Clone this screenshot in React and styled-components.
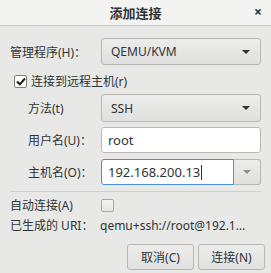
import React from 'react';
import styled, { createGlobalStyle, css } from 'styled-components';

const GlobalStyle = createGlobalStyle`
  html, body {
    margin: 0;
    padding: 0;
    background: #e8e8e7;
  }
  body {
    font-family: "Noto Sans", "Noto Sans CJK SC", sans-serif;
    color: #2e3436;
  }
`;

const Window = styled.div`
  width: 271px;
  height: 273px;
  background: #e8e8e7;
  display: flex;
  flex-direction: column;
  overflow: hidden;
`;

const TitleBar = styled.div`
  height: 25px;
  border-bottom: 1px solid #c9c9c6;
  background: #f3f3f2;
  display: flex;
  align-items: center;
  justify-content: center;
  position: relative;
`;

const Title = styled.span`
  font-size: 13px;
  font-weight: 700;
  color: #2e3436;
`;

const Close = styled.span`
  position: absolute;
  right: 9px;
  top: 5px;
  font-size: 14px;
  font-weight: 700;
  line-height: 14px;
  color: #2e3436;
`;

const Body = styled.div`
  padding: 12px 10px 0 10px;
  display: flex;
  flex-direction: column;
`;

const Row = styled.div`
  display: flex;
  align-items: center;
  height: ${(p) => p.$h || 26}px;
  margin-top: ${(p) => p.$mt || 0}px;
`;

const Label = styled.span`
  width: ${(p) => (p.$indent ? 73 : 91)}px;
  padding-left: ${(p) => (p.$indent ? 18 : 0)}px;
  font-size: 12px;
  white-space: nowrap;
  flex-shrink: 0;
`;

const grayButton = css`
  background: linear-gradient(#ececeb, #e0e0df);
  border: 1px solid #b6b6b3;
  border-radius: 3px;
  box-sizing: border-box;
`;

const Combo = styled.div`
  ${grayButton};
  width: 160px;
  height: 100%;
  display: flex;
  align-items: center;
  justify-content: space-between;
  padding: 0 10px 0 9px;
  font-size: 12px;
`;

const Arrow = styled.span`
  width: 0;
  height: 0;
  border-left: 4px solid transparent;
  border-right: 4px solid transparent;
  border-top: 4px solid ${(p) => p.$color || '#2e3436'};
`;

const Entry = styled.div`
  width: ${(p) => p.$w || 160}px;
  height: 100%;
  box-sizing: border-box;
  background: #ffffff;
  border: 1px solid ${(p) => (p.$focus ? '#4a90d9' : '#b8b8b5')};
  border-radius: ${(p) => (p.$joined ? '3px 0 0 3px' : '3px')};
  display: flex;
  align-items: center;
  padding-left: 6px;
  font-size: 13px;
  color: #2e3436;
`;

const Caret = styled.span`
  display: inline-block;
  width: 1px;
  height: 15px;
  background: #2e3436;
  margin-left: 1px;
`;

const DropButton = styled.div`
  ${grayButton};
  width: 27px;
  height: 100%;
  border-left: none;
  border-radius: 0 3px 3px 0;
  display: flex;
  align-items: center;
  justify-content: center;
`;

const CheckRow = styled.label`
  display: flex;
  align-items: center;
  gap: 4px;
  padding-left: 4px;
  font-size: 12px;
`;

const CheckBox = styled.span`
  width: 13px;
  height: 13px;
  box-sizing: border-box;
  border: 1px solid ${(p) => (p.$checked ? '#7d807b' : '#a8aaa6')};
  border-radius: 2px;
  background: ${(p) => (p.$checked ? '#ffffff' : 'linear-gradient(#f4f4f3, #e6e6e5)')};
  display: flex;
  align-items: center;
  justify-content: center;
`;

const Separator = styled.div`
  height: 1px;
  background: #cfcfcc;
  margin-top: 6px;
`;

const UriText = styled.span`
  font-size: 12px;
  white-space: nowrap;
  margin-left: -1px;
`;

const Buttons = styled.div`
  display: flex;
  justify-content: flex-end;
  gap: 4px;
  margin-top: 11px;
  margin-right: -4px;
`;

const Button = styled.div`
  ${grayButton};
  width: 67px;
  height: 26px;
  display: flex;
  align-items: center;
  justify-content: center;
  font-size: 12px;
`;

export default function App() {
  return (
    <Window>
      <GlobalStyle />
      <TitleBar>
        <Title>添加连接</Title>
        <Close>×</Close>
      </TitleBar>
      <Body>
        <Row $h={27}>
          <Label>管理程序(H)：</Label>
          <Combo>
            <span>QEMU/KVM</span>
            <Arrow />
          </Combo>
        </Row>
        <Row $h={22} $mt={5}>
          <CheckRow>
            <CheckBox $checked>
              <svg width="10" height="9" viewBox="0 0 10 9">
                <path d="M1 4.5 L3.8 7.3 L9 1.5" fill="none" stroke="#1a1a1a" strokeWidth="2" />
              </svg>
            </CheckBox>
            连接到远程主机(r)
          </CheckRow>
        </Row>
        <Row $h={28} $mt={2}>
          <Label $indent>方法(t)</Label>
          <Combo>
            <span>SSH</span>
            <Arrow />
          </Combo>
        </Row>
        <Row $h={26} $mt={5}>
          <Label $indent>用户名(U)：</Label>
          <Entry>root</Entry>
        </Row>
        <Row $h={26} $mt={6}>
          <Label $indent>主机名(O)：</Label>
          <Entry $w={133} $focus $joined>
            192.168.200.13<Caret />
          </Entry>
          <DropButton>
            <Arrow $color="#8b8e8f" />
          </DropButton>
        </Row>
        <Separator />
        <Row $h={16} $mt={5}>
          <Label>自动连接(A)</Label>
          <CheckBox />
        </Row>
        <Row $h={16} $mt={4}>
          <Label>已生成的 URI：</Label>
          <UriText>qemu+ssh://root@192.1…</UriText>
        </Row>
        <Buttons>
          <Button>取消(C)</Button>
          <Button>连接(N)</Button>
        </Buttons>
      </Body>
    </Window>
  );
}
